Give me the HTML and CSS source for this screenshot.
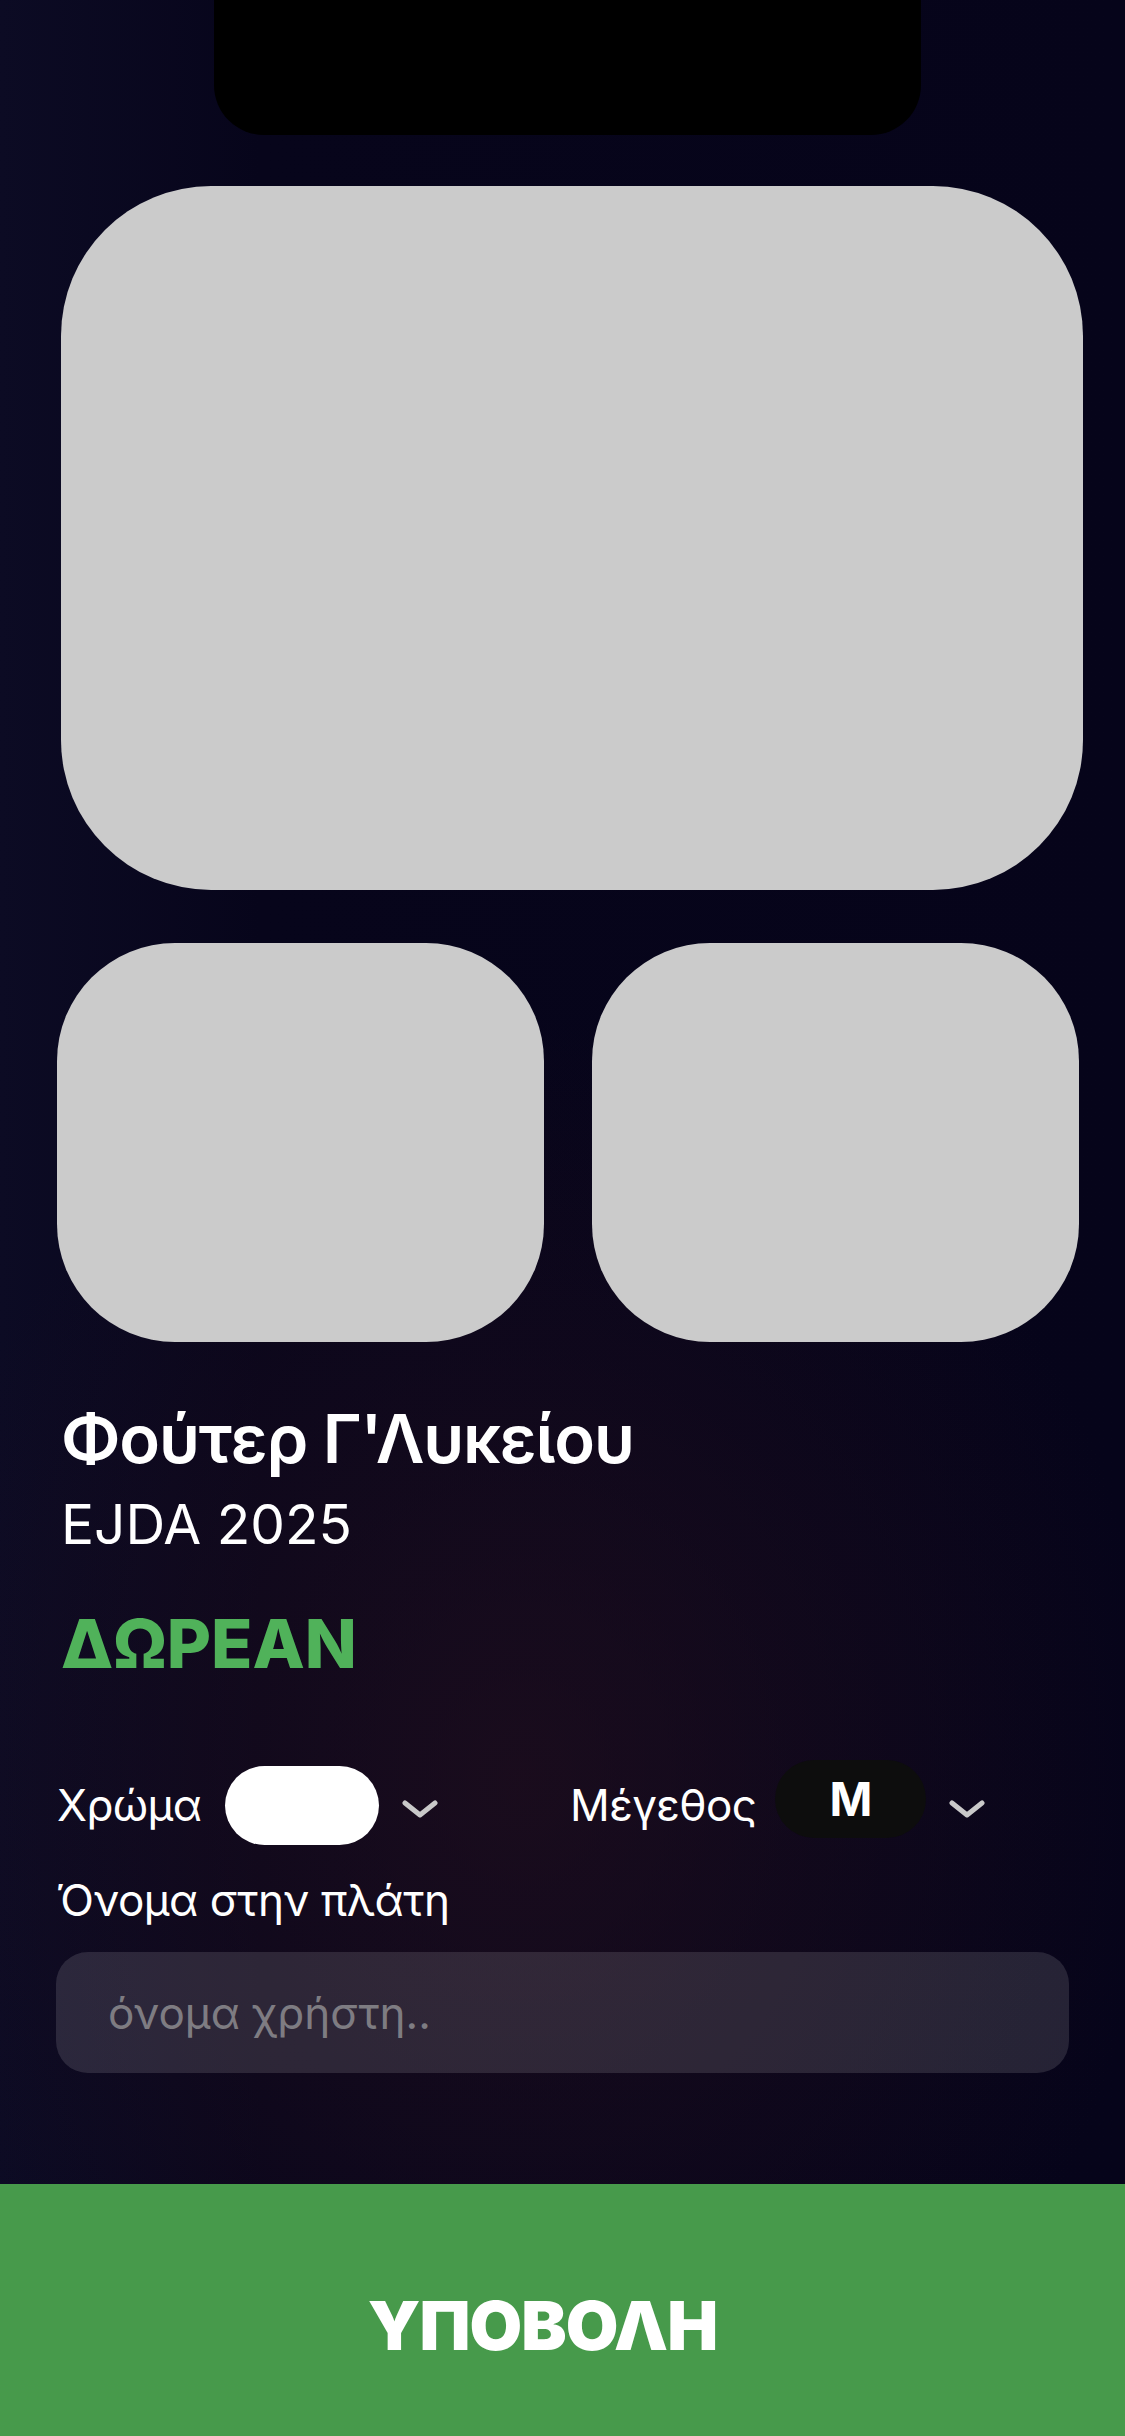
FILE: index.html
```html
<!DOCTYPE html>
<html lang="el">
<head>
<meta charset="utf-8">
<title>Φούτερ Γ'Λυκείου</title>
<link rel="stylesheet" href="styles.css">
</head>
<body>
<div class="screen">
  <div class="notch"></div>
  <div class="gallery">
    <div class="photo photo-main"></div>
    <div class="thumbs">
      <div class="photo photo-thumb"></div>
      <div class="photo photo-thumb"></div>
    </div>
  </div>
  <div class="info">
    <h1 class="title">Φούτερ Γ'Λυκείου</h1>
    <div class="subtitle">EJDA 2025</div>
    <div class="price">ΔΩΡΕΑΝ</div>
  </div>
  <div class="options">
    <div class="option">
      <span class="option-label">Χρώμα</span>
      <span class="swatch"></span>
      <svg class="chev" viewBox="0 0 36 18" width="36" height="18"><polyline points="3,3 18,15 33,3" fill="none" stroke="#c9c9c9" stroke-width="5" stroke-linecap="round" stroke-linejoin="round"/></svg>
    </div>
    <div class="option">
      <span class="option-label">Μέγεθος</span>
      <span class="size-pill">M</span>
      <svg class="chev" viewBox="0 0 36 18" width="36" height="18"><polyline points="3,3 18,15 33,3" fill="none" stroke="#c9c9c9" stroke-width="5" stroke-linecap="round" stroke-linejoin="round"/></svg>
    </div>
  </div>
  <div class="name-field">
    <label class="field-label" for="backname">Όνομα στην πλάτη</label>
    <input class="field-input" id="backname" type="text" placeholder="όνομα χρήστη..">
  </div>
  <div class="spacer"></div>
  <button class="submit">ΥΠΟΒΟΛΗ</button>
</div>
</body>
</html>
```

FILE: styles.css
```css
* { box-sizing: border-box; }
html, body {
  margin: 0;
  padding: 0;
}
body {
  width: 1125px;
  height: 2436px;
  overflow: hidden;
  font-family: Inter, "Noto Sans", "DejaVu Sans", sans-serif;
  color: #fff;
  background-color: #06041a;
  background-image:
    radial-gradient(ellipse 640px 760px at 520px 1780px, rgba(36, 16, 30, 0.65), rgba(36, 16, 30, 0) 100%),
    linear-gradient(90deg, #0c0b24 0px, #07051b 260px, #06041a 100%);
}
.screen {
  display: flex;
  flex-direction: column;
  height: 2436px;
}
.notch {
  width: 707px;
  height: 135px;
  margin-left: 214px;
  background: #000;
  border-radius: 0 0 50px 50px;
  flex-shrink: 0;
}
.gallery {
  display: flex;
  flex-direction: column;
  gap: 53px;
  margin-top: 51px;
}
.photo { background: #cbcbcb; }
.photo-main {
  width: 1022px;
  height: 704px;
  margin-left: 61px;
  border-radius: 150px;
}
.thumbs {
  display: flex;
  gap: 48px;
  padding-left: 57px;
}
.photo-thumb {
  width: 487px;
  height: 399px;
  border-radius: 118px;
}
.info {
  padding-left: 61px;
  margin-top: 55px;
}
.title {
  margin: 0;
  font-size: 67px;
  font-weight: 600;
  line-height: 84px;
  letter-spacing: -1.2px;
}
.subtitle {
  font-size: 55px;
  font-weight: 400;
  line-height: 70px;
  margin-top: 8px;
}
.price {
  margin-top: 42px;
  font-size: 68px;
  font-weight: 800;
  line-height: 84px;
  color: #50b25a;
}
.options {
  display: grid;
  grid-template-columns: 513px 1fr;
  padding-left: 57px;
  margin-top: 77px;
}
.option {
  display: flex;
  align-items: center;
  height: 86px;
}
.option-label {
  font-size: 44px;
  font-weight: 400;
  letter-spacing: -0.6px;
}
.swatch {
  width: 154px;
  height: 79px;
  margin-left: 24px;
  border-radius: 40px;
  background: #fff;
}
.size-pill {
  width: 151px;
  height: 78px;
  margin-left: 19px;
  border-radius: 39px;
  background: #0d0d0d;
  display: flex;
  align-items: center;
  justify-content: center;
  font-size: 46px;
  font-weight: 700;
  margin-top: -12px;
}
.chev { margin-left: 23px; margin-top: 8px; }
.name-field {
  padding-left: 56px;
  margin-top: 24px;
  display: flex;
  flex-direction: column;
}
.field-label {
  font-size: 44px;
  line-height: 56px;
  letter-spacing: -0.5px;
}
.field-input {
  margin-top: 24px;
  width: 1013px;
  height: 121px;
  border: none;
  border-radius: 32px;
  background: rgba(255, 255, 255, 0.12);
  padding: 0 0 0 52px;
  font-family: Inter, "Noto Sans", sans-serif;
  font-size: 44px;
  color: #fff;
  outline: none;
}
.field-input::placeholder { color: #7e7c82; }
.spacer { flex: 1; }
.submit {
  height: 252px;
  width: 1125px;
  border: none;
  background: #479a4b;
  color: #fff;
  font-family: Inter, "Noto Sans", sans-serif;
  font-size: 68px;
  font-weight: 900;
  padding: 30px 40px 0 0;
  letter-spacing: -1px;
}
```
